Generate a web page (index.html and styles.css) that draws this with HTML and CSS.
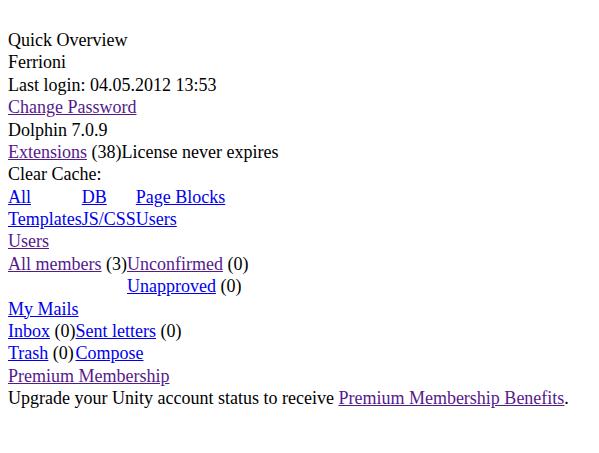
FILE: index.html
```html
<!DOCTYPE html>
<html>
<head>
<meta charset="utf-8">
<link rel="stylesheet" href="styles.css">
</head>
<body>
<div class="page">
  <div class="line">Quick Overview</div>
  <div class="line">Ferrioni</div>
  <div class="line">Last login: 04.05.2012 13:53</div>
  <div class="line"><a class="visited" href="#">Change Password</a></div>
  <div class="line">Dolphin 7.0.9</div>
  <div class="line"><a class="visited" href="#">Extensions</a> (38)License never expires</div>
  <div class="line">Clear Cache:</div>
  <div class="grid3">
    <a class="link" href="#">All</a><a class="link" href="#">DB</a><a class="link" href="#">Page Blocks</a>
    <a class="link" href="#">Templates</a><a class="link" href="#">JS/CSS</a><a class="link" href="#">Users</a>
  </div>
  <div class="line"><a class="visited" href="#">Users</a></div>
  <div class="grid2">
    <span><a class="visited" href="#">All members</a> (3)</span><span><a class="visited" href="#">Unconfirmed</a> (0)</span>
    <span></span><span><a class="link" href="#">Unapproved</a> (0)</span>
  </div>
  <div class="line"><a class="link" href="#">My Mails</a></div>
  <div class="grid2">
    <span><a class="link" href="#">Inbox</a> (0)</span><span><a class="link" href="#">Sent letters</a> (0)</span>
    <span><a class="link" href="#">Trash</a> (0)</span><span><a class="link" href="#">Compose</a></span>
  </div>
  <div class="line"><a class="visited" href="#">Premium Membership</a></div>
  <div class="line">Upgrade your Unity account status to receive <a class="visited" href="#">Premium Membership Benefits</a>.</div>
</div>
</body>
</html>
```
FILE: styles.css
```css
html, body {
  margin: 0;
  padding: 0;
  background: #ffffff;
}
body {
  font-family: "Liberation Serif", "Times New Roman", serif;
  font-size: 18px;
  line-height: 22.375px;
  color: #000000;
}
.page {
  padding: 29px 8px 8px 8px;
}
.line {
  white-space: nowrap;
}
a {
  text-decoration: underline;
}
.link {
  color: #0000ee;
}
.visited {
  color: #551a8b;
}
.grid3 {
  display: grid;
  grid-template-columns: max-content max-content max-content;
  justify-content: start;
}
.grid2 {
  display: grid;
  grid-template-columns: max-content max-content;
  justify-content: start;
  white-space: nowrap;
}
```
